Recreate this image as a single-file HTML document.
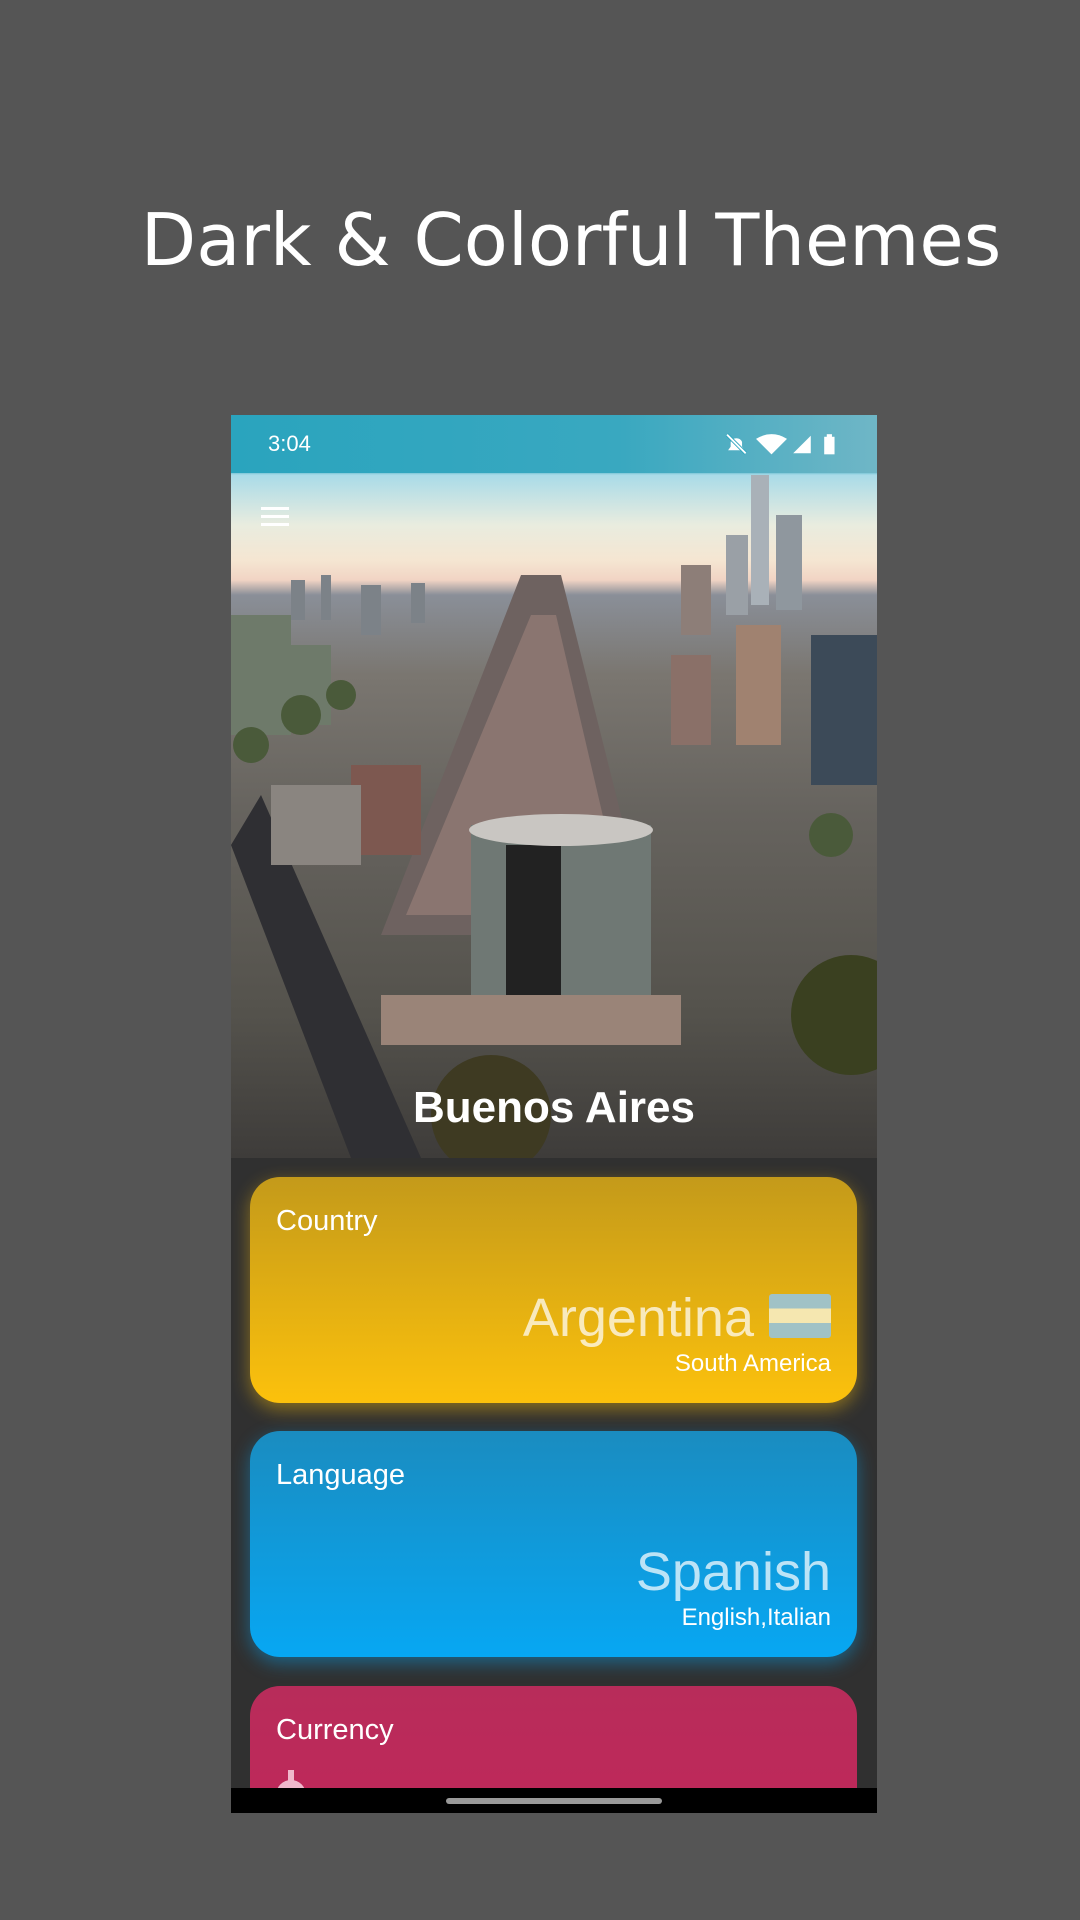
<!DOCTYPE html>
<html><head><meta charset="utf-8"><style>
*{margin:0;padding:0;box-sizing:border-box}
body{width:1080px;height:1920px;background:#555555;position:relative;overflow:hidden;font-family:"Liberation Sans",sans-serif}
.title{position:absolute;left:0;width:1142px;top:198px;text-align:center;color:#fff;font-family:"DejaVu Sans",sans-serif;font-size:72px;letter-spacing:0px}
.phone{position:absolute;left:231px;top:415px;width:646px;height:1398px;background:#303030;overflow:hidden}
.hero{position:absolute;left:0;top:0;width:646px;height:743px;background:linear-gradient(180deg,#2aa6c0 0px,#4fb0c4 56px,#a9dbe8 60px,#e9ecdf 110px,#f5e6d2 145px,#f1d4c4 165px,#8a8f98 180px,#7a7670 260px,#66635e 400px,#54524c 600px,#3e3c3a 743px);overflow:hidden}
.status{position:absolute;left:0;top:0;width:646px;height:58px;background:linear-gradient(90deg,#2aa4be,#39a8c0 60%,#6fb6c6);}
.time{position:absolute;left:37px;top:16px;color:#fff;font-size:22px}
.river{position:absolute;left:0;top:0;width:646px;height:743px}
.name{position:absolute;left:0;width:646px;top:668px;text-align:center;color:#fff;font-weight:bold;font-size:44px}
.card{position:absolute;left:19px;width:607px;border-radius:30px;color:#fff}
.lab{position:absolute;left:26px;font-size:29px}
.big{position:absolute;right:26px;font-size:54px;color:rgba(255,255,255,.72);text-align:right}
.sub{position:absolute;right:26px;font-size:24px;text-align:right}
.nav{position:absolute;left:0;top:1373px;width:646px;height:25px;background:#000}
.handle{position:absolute;left:215px;top:10px;width:216px;height:6px;border-radius:3px;background:#999}
</style></head><body>
<div class="title">Dark &amp; Colorful Themes</div>
<div class="phone">
 <div class="hero">
  <svg class="river" viewBox="0 0 646 743">
   <g fill="#7c8288"><rect x="60" y="165" width="14" height="40"/><rect x="90" y="160" width="10" height="45"/><rect x="130" y="170" width="20" height="50"/><rect x="180" y="168" width="14" height="40"/></g>
   <rect x="520" y="60" width="18" height="130" fill="#a9b1b8"/>
   <rect x="545" y="100" width="26" height="95" fill="#8f979e"/>
   <rect x="495" y="120" width="22" height="80" fill="#9aa0a6"/>
   <rect x="450" y="150" width="30" height="70" fill="#8d7e78"/>
   <rect x="580" y="220" width="66" height="150" fill="#3c4a58"/>
   <rect x="505" y="210" width="45" height="120" fill="#a08270"/>
   <rect x="440" y="240" width="40" height="90" fill="#8a7068"/>
   <g fill="#6e7a6a"><rect x="0" y="200" width="60" height="120"/><rect x="60" y="230" width="40" height="80"/></g>
   <polygon points="290,160 330,160 420,520 150,520" fill="#6e6260"/>
   <polygon points="300,200 325,200 395,500 175,500" fill="#8a7570"/>
   <polygon points="0,430 30,380 190,743 120,743" fill="#2f2f33"/>
   <rect x="120" y="350" width="70" height="90" fill="#7d5850"/>
   <rect x="40" y="370" width="90" height="80" fill="#8a8580"/>
   <g fill="#4a5a3a"><circle cx="70" cy="300" r="20"/><circle cx="110" cy="280" r="15"/><circle cx="20" cy="330" r="18"/><circle cx="600" cy="420" r="22"/></g>
   <rect x="240" y="410" width="180" height="180" fill="#6f7874"/>
   <rect x="275" y="430" width="55" height="160" fill="#222"/>
   <ellipse cx="330" cy="415" rx="92" ry="16" fill="#c9c6c2"/>
   <rect x="150" y="580" width="300" height="50" fill="#9a8478"/>
   <circle cx="620" cy="600" r="60" fill="#3a4020"/>
   <circle cx="260" cy="700" r="60" fill="#3e3a22"/>
  </svg>
  <div class="status"><div class="time">3:04</div>
   <svg style="position:absolute;left:494px;top:16px" width="124" height="26" viewBox="0 0 120 22">
    <path d="M3 17h16l-2.5-3.5V9a6 6 0 0 0-11 0v4.5z M9 20h4" fill="#fff"/><path d="M2 2l18 18" stroke="#2aa4be" stroke-width="3.5"/><path d="M2 2l18 18" stroke="#fff" stroke-width="1.8"/>
    <path d="M30 6q15-9 30 0l-15 15z" fill="#fff"/>
    <path d="M66 20l17-17v17z" fill="#fff"/>
    <rect x="96" y="4" width="10" height="17" fill="#fff"/><rect x="98.5" y="1.5" width="5" height="3" fill="#fff"/>
   </svg>
  </div>
  <div style="position:absolute;left:30px;top:92px;width:28px;height:20px">
   <div style="height:3px;background:#fff;margin-bottom:5px"></div><div style="height:3px;background:#fff;margin-bottom:5px"></div><div style="height:3px;background:#fff"></div>
  </div>
  <div class="name">Buenos Aires</div>
 </div>
 <div class="card" style="top:762px;height:226px;background:linear-gradient(180deg,#c49a1a,#fcc10c);box-shadow:0 6px 18px rgba(252,193,12,.45)">
  <div class="lab" style="top:28px">Country</div>
  <div class="big" style="top:110px">Argentina <span style="display:inline-block;width:62px;height:44px;vertical-align:-2px;background:linear-gradient(#9cc3cf 33%,#f6eab8 33%,#f6eab8 66%,#9cc3cf 66%);border-radius:3px;opacity:.95"></span></div>
  <div class="sub" style="top:173px">South America</div>
 </div>
 <div class="card" style="top:1016px;height:226px;background:linear-gradient(180deg,#1a8cc0,#07a7f3);box-shadow:0 6px 18px rgba(7,167,243,.45)">
  <div class="lab" style="top:28px">Language</div>
  <div class="big" style="top:110px">Spanish</div>
  <div class="sub" style="top:173px">English,Italian</div>
 </div>
 <div class="card" style="top:1271px;height:226px;background:linear-gradient(180deg,#b82c5a,#c4255a)">
  <div class="lab" style="top:28px">Currency</div>
  <div style="position:absolute;left:26px;top:94px;width:30px;height:30px;border-radius:50%;background:#f0b8cc"></div>
  <div style="position:absolute;left:38px;top:84px;width:6px;height:14px;background:#f0b8cc"></div>
 </div>
 <div class="nav"><div class="handle"></div></div>
</div>
</body></html>
